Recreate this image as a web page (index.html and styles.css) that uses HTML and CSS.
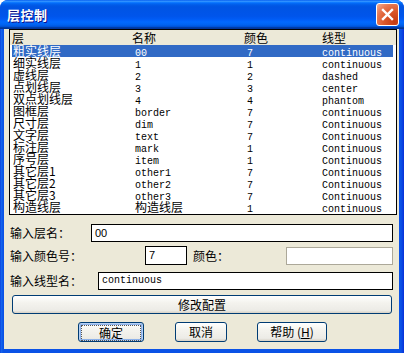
FILE: index.html
```html
<!DOCTYPE html>
<html lang="zh-CN">
<head>
<meta charset="utf-8">
<title>层控制</title>
<link rel="stylesheet" href="styles.css">
</head>
<body>
<div class="window">
  <div class="titlebar">
    <span class="title">层控制</span>
    <span class="close">
      <svg width="21" height="21" viewBox="0 0 21 21"><path d="M6 6 L15 15 M15 6 L6 15" stroke="#fff" stroke-width="2.4" stroke-linecap="square" fill="none"/></svg>
    </span>
  </div>
  <div class="client">
    <div class="list">
      <div class="head">
        <span>层</span><span>名称</span><span>颜色</span><span>线型</span>
      </div>
      <div class="row sel"><span class="cn">粗实线层</span><span>00</span><span>7</span><span>continuous</span></div>
      <div class="row"><span class="cn">细实线层</span><span>1</span><span>1</span><span>continuous</span></div>
      <div class="row"><span class="cn">虚线层</span><span>2</span><span>2</span><span>dashed</span></div>
      <div class="row"><span class="cn">点划线层</span><span>3</span><span>3</span><span>center</span></div>
      <div class="row"><span class="cn">双点划线层</span><span>4</span><span>4</span><span>phantom</span></div>
      <div class="row"><span class="cn">图框层</span><span>border</span><span>7</span><span>continuous</span></div>
      <div class="row"><span class="cn">尺寸层</span><span>dim</span><span>7</span><span>Continuous</span></div>
      <div class="row"><span class="cn">文字层</span><span>text</span><span>7</span><span>Continuous</span></div>
      <div class="row"><span class="cn">标注层</span><span>mark</span><span>1</span><span>Continuous</span></div>
      <div class="row"><span class="cn">序号层</span><span>item</span><span>1</span><span>Continuous</span></div>
      <div class="row"><span class="cn">其它层1</span><span>other1</span><span>7</span><span>Continuous</span></div>
      <div class="row"><span class="cn">其它层2</span><span>other2</span><span>7</span><span>Continuous</span></div>
      <div class="row"><span class="cn">其它层3</span><span>other3</span><span>7</span><span>Continuous</span></div>
      <div class="row"><span class="cn">构造线层</span><span class="cn">构造线层</span><span>1</span><span>continuous</span></div>
    </div>

    <div class="frow r1">
      <span class="label l1">输入层名：</span>
      <span class="field f1">00</span>
    </div>
    <div class="frow r2">
      <span class="label l2">输入颜色号：</span>
      <span class="field f2">7</span>
      <span class="label l3">颜色：</span>
      <span class="swatch"></span>
    </div>
    <div class="frow r3">
      <span class="label l4">输入线型名：</span>
      <span class="field f3 mono">continuous</span>
    </div>

    <div class="btn wide">修改配置</div>

    <div class="btnrow">
      <div class="btn ok"><span class="focus">确定</span></div>
      <div class="btn cancel">取消</div>
      <div class="btn help">帮助 (<u>H</u>)</div>
    </div>
  </div>
</div>
</body>
</html>
```

FILE: styles.css
```css
html, body {
  margin: 0;
  padding: 0;
  background: #ffffff;
}

.window {
  width: 404px;
  height: 353px;
  box-sizing: border-box;
  display: flex;
  flex-direction: column;
  border-radius: 8px 8px 0 0;
  overflow: hidden;
  background: linear-gradient(to right, #0831d9 0, #166aee 1px, #0a52e6 3px, #0a52e6 calc(100% - 3px), #0831d9 100%);
  font-family: "Noto Sans CJK SC", sans-serif;
  color: #000;
}

.titlebar {
  height: 29px;
  flex: none;
  display: flex;
  align-items: center;
  justify-content: space-between;
  padding: 0 5px 0 7px;
  background: linear-gradient(to bottom, #0058ee 0%, #3593ff 4%, #288eff 6%, #127dff 8%, #036ffc 10%, #0262ee 14%, #0057e5 20%, #0054e3 24%, #0055eb 56%, #005bf5 66%, #026afe 76%, #0062ef 86%, #0052d6 92%, #0040ab 94%, #003092 100%);
}

.title {
  color: #fff;
  font-weight: bold;
  font-size: 13px;
  line-height: 16px;
  letter-spacing: 0.5px;
  text-shadow: 1px 1px 0 #0f1089;
}

.close {
  width: 21px;
  height: 21px;
  border: 1px solid #fff;
  border-radius: 3px;
  display: flex;
  background: radial-gradient(circle at 85% 85%, #c43a12 0%, #dc5a2c 45%, #e7764f 70%, #f0a68a 95%);
}

.client {
  flex: 1;
  margin: 0 5px 4px 4px;
  background: #ece9d8;
  display: flex;
  flex-direction: column;
}

/* list */
.list {
  margin-left: 5px;
  width: 386px;
  height: 184px;
  border: 1px solid #000;
  background: #fff;
}

.head {
  height: 15px;
  display: grid;
  grid-template-columns: 120px 112px 78px 1fr;
  padding-left: 2px;
  background: #ece9d8;
  font-size: 12px;
  line-height: 15px;
}

.row {
  height: 12px;
  margin: 0 3px 0 2px;
  display: grid;
  grid-template-columns: 122px 112px 75px 1fr;
  align-items: baseline;
  padding-left: 1px;
  font-family: "Liberation Mono", "Noto Sans CJK SC", monospace;
  font-size: 10px;
  line-height: 12px;
  white-space: nowrap;
}

.row .cn {
  font-family: "Noto Sans CJK SC", sans-serif;
  font-size: 12px;
  line-height: 12px;
}

.row.sel {
  background: #316ac5;
  color: #fff;
}

/* form */
.frow {
  display: flex;
  align-items: center;
  height: 18px;
  margin-left: 6px;
}

.r1 { margin-top: 9px; }
.r2 { margin-top: 4px; height: 19px; }
.r3 { margin-top: 7px; }

.label {
  font-size: 12px;
  line-height: 18px;
  white-space: nowrap;
}

.l1 { width: 81px; }
.l2 { width: 135px; }
.l3 { width: 93px; margin-left: 6px; }
.l4 { width: 88px; }

.field {
  box-sizing: border-box;
  height: 18px;
  border: 1px solid #000;
  background: #fff;
  font-family: "Liberation Sans", sans-serif;
  font-size: 11px;
  line-height: 16px;
  padding-left: 3px;
}

.f1 { width: 302px; }
.f2 { width: 42px; height: 19px; line-height: 17px; }
.f3 { width: 295px; }

.mono {
  font-family: "Liberation Mono", monospace;
  font-size: 10px;
}

.swatch {
  box-sizing: border-box;
  width: 107px;
  height: 18px;
  border: 1px solid #aca899;
  background: #fff;
}

/* buttons */
.btn {
  box-sizing: border-box;
  height: 19px;
  border: 1px solid #003c74;
  border-radius: 3px;
  background: linear-gradient(to bottom, #ffffff 0%, #f4f3ee 40%, #ecebe6 85%, #d6d0c5 100%);
  font-size: 12px;
  line-height: 17px;
  text-align: center;
}

.wide {
  margin: 5px 0 0 8px;
  width: 380px;
}

.btnrow {
  display: flex;
  margin-top: 8px;
  margin-left: 74px;
  height: 20px;
}

.btnrow .btn {
  height: 20px;
  line-height: 18px;
}

.ok {
  width: 66px;
  box-shadow: inset 0 0 0 1px #b6d0f3, inset 0 0 0 2px #8eb2ea;
  padding: 2px;
}

.ok .focus {
  display: block;
  height: 14px;
  line-height: 14px;
  border: 1px dotted #555;
}

.cancel {
  width: 52px;
  margin-left: 31px;
}

.help {
  width: 70px;
  margin-left: 30px;
}
```
